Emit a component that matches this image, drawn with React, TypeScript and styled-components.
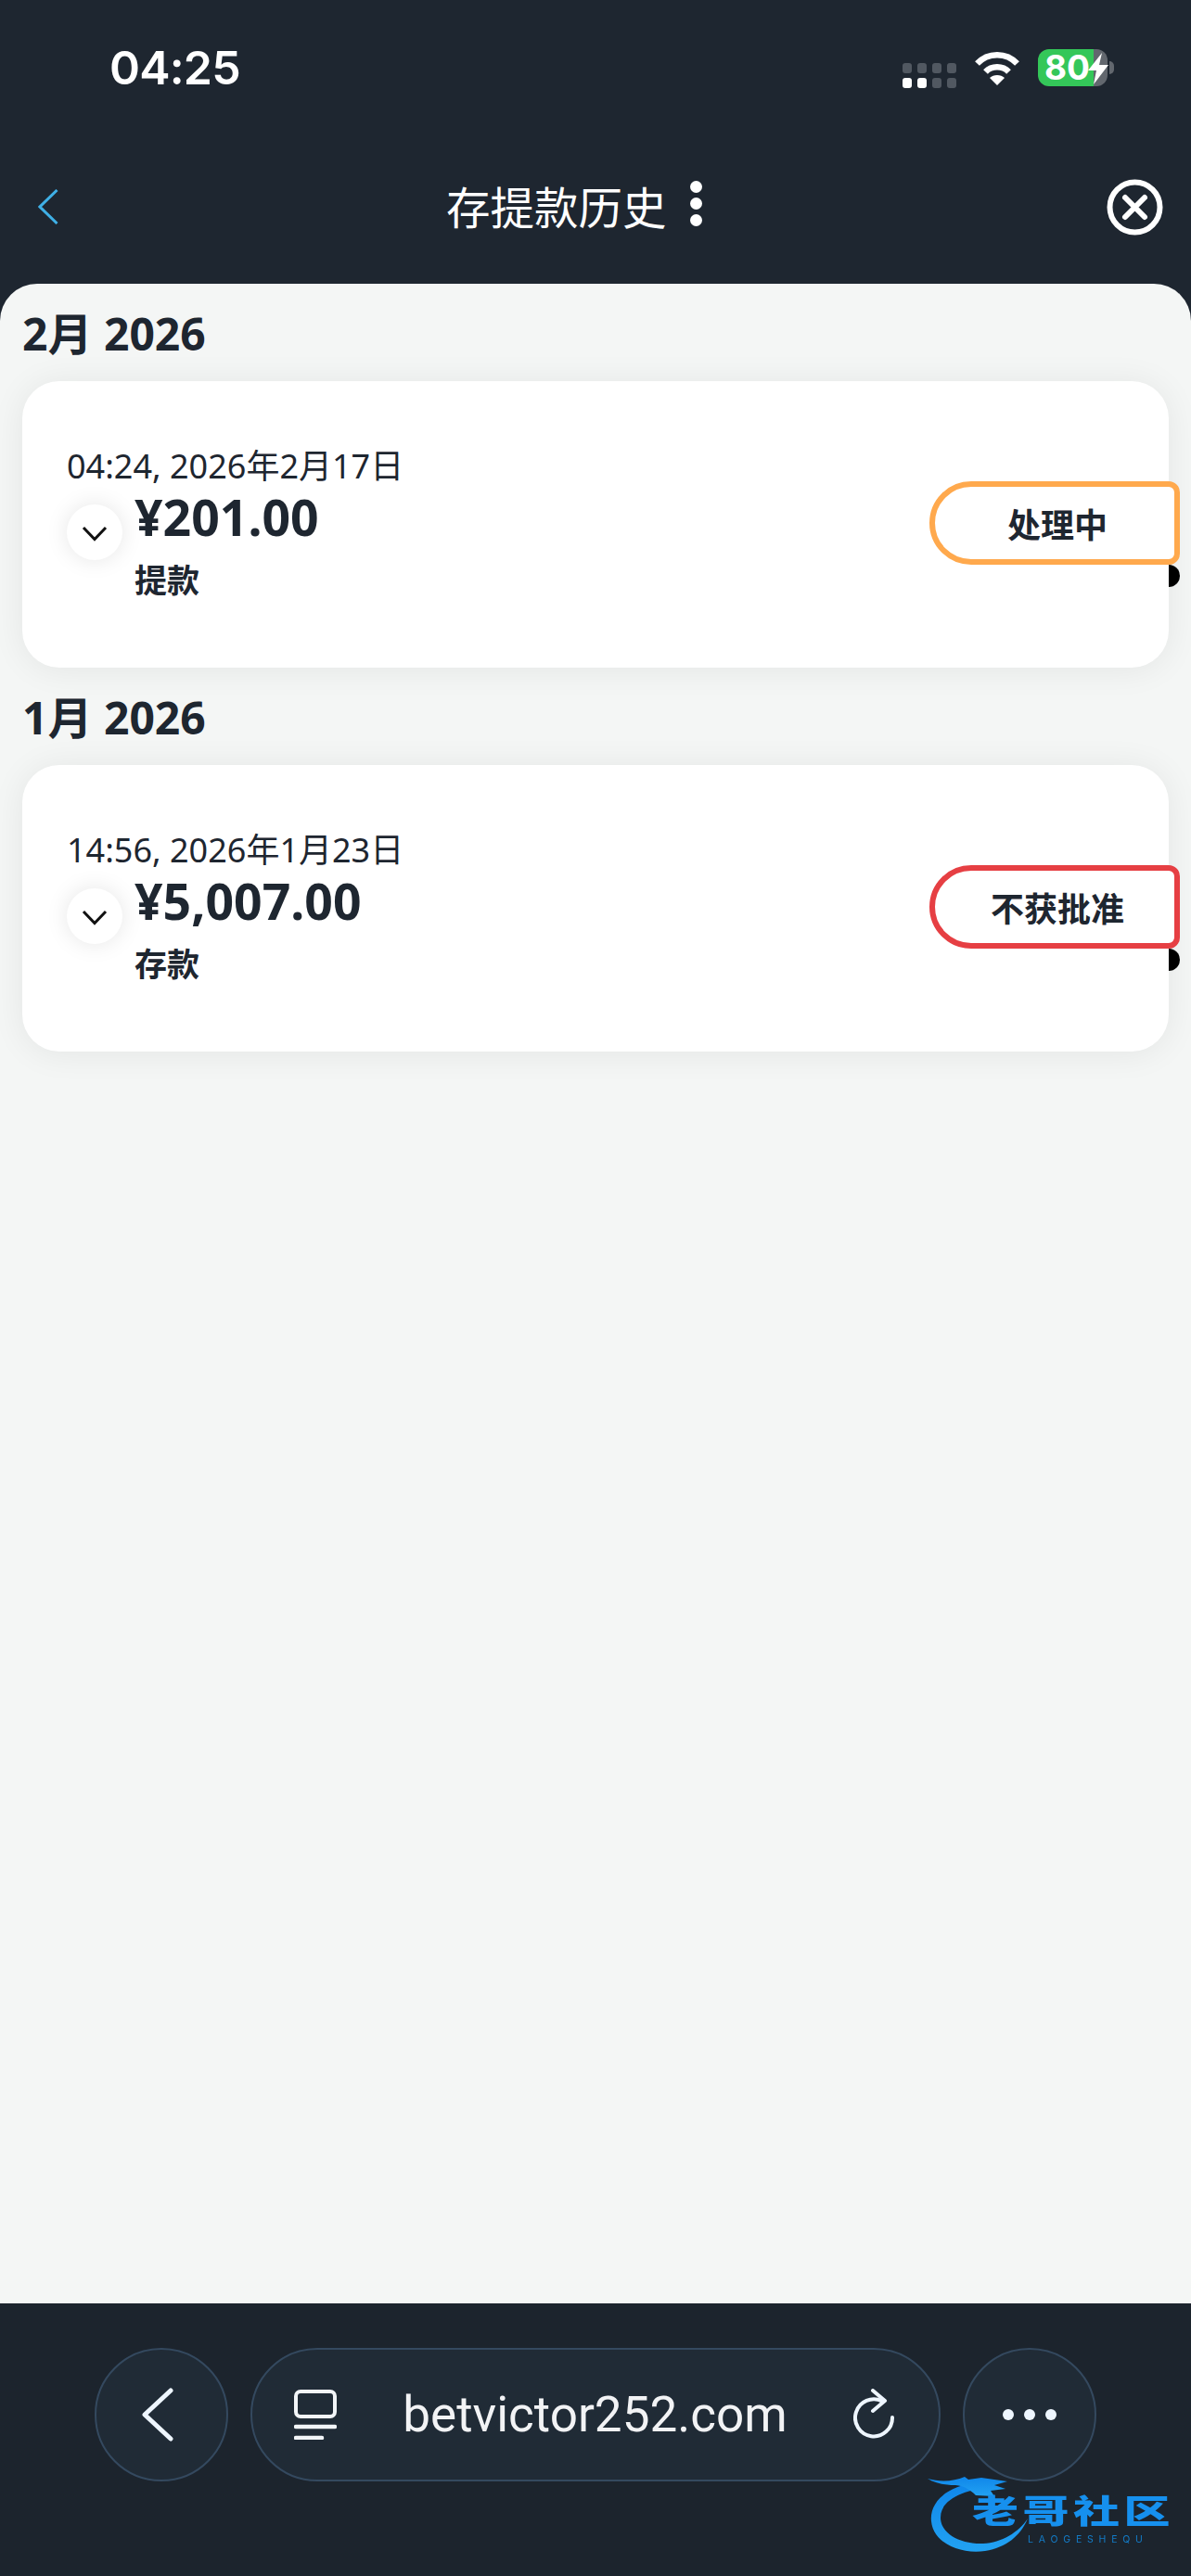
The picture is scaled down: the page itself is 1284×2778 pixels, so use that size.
import React from 'react';
import styled, { createGlobalStyle } from 'styled-components';

const GlobalStyle = createGlobalStyle`
  html, body {
    margin: 0;
    padding: 0;
    background: #1e2630;
  }
  * {
    box-sizing: border-box;
  }
`;

const CJK = '"Noto Sans", "Noto Sans CJK SC", sans-serif';

type Entry = {
  month: string;
  date: string;
  amount: string;
  kind: string;
  status: string;
  statusColor: string;
};

const entries: Entry[] = [
  { month: '2月 2026', date: '04:24, 2026年2月17日', amount: '¥201.00', kind: '提款', status: '处理中', statusColor: '#ffa94d' },
  { month: '1月 2026', date: '14:56, 2026年1月23日', amount: '¥5,007.00', kind: '存款', status: '不获批准', statusColor: '#e63f43' },
];

const App: React.FC = () => {
  return (
    <>
      <GlobalStyle />
      <Page>
        <Header>
          <StatusBar>
            <Clock>04:25</Clock>
            <StatusIcons>
              <Signal>
                {[0, 1, 2, 3, 4, 5, 6, 7].map((i) => (
                  <SignalDot key={i} $on={i === 4 || i === 5} />
                ))}
              </Signal>
              <svg width="50" height="38" viewBox="0 0 50 38" fill="none">
                <path d="M3.5 14.5 C15 2 35 2 46.5 14.5" stroke="#fff" strokeWidth="6.5" strokeLinejoin="round" />
                <path d="M12.5 23.5 C19 16.5 31 16.5 37.5 23.5" stroke="#fff" strokeWidth="6.5" />
                <path d="M17 30 C21 26 29 26 33 30 L25 38 Z" fill="#fff" />
              </svg>
              <Battery>
                <BatteryLevel>80</BatteryLevel>
                <BatteryBolt width="24" height="34" viewBox="0 0 24 34">
                  <path d="M16 0 L1 19 H10 L7 34 L23 13 H13 Z" fill="#fff" />
                </BatteryBolt>
                <BatteryNub />
              </Battery>
            </StatusIcons>
          </StatusBar>
          <NavBar>
            <BackIcon width="22" height="38" viewBox="0 0 22 38" fill="none">
              <path d="M20.5 1 L2 19 L20.5 37" stroke="#3fb0e6" strokeWidth="3" />
            </BackIcon>
            <Title>存提款历史</Title>
            <MenuDots>
              <i />
              <i />
              <i />
            </MenuDots>
            <CloseIcon width="61" height="61" viewBox="0 0 61 61" fill="none">
              <circle cx="30.5" cy="30.5" r="27" stroke="#fff" strokeWidth="6" />
              <path d="M20 20 L41 41 M41 20 L20 41" stroke="#fff" strokeWidth="6" strokeLinecap="round" />
            </CloseIcon>
          </NavBar>
        </Header>

        <Content>
          {entries.map((entry) => (
            <section key={entry.month}>
              <MonthTitle>{entry.month}</MonthTitle>
              <Card>
                <CardInfo>
                  <DateText>{entry.date}</DateText>
                  <AmountRow>
                    <ExpandButton>
                      <svg width="28" height="17" viewBox="0 0 28 17" fill="none">
                        <path d="M2 2 L14 14.5 L26 2" stroke="#111" strokeWidth="3" />
                      </svg>
                    </ExpandButton>
                    <div>
                      <Amount>{entry.amount}</Amount>
                      <Kind>{entry.kind}</Kind>
                    </div>
                  </AmountRow>
                </CardInfo>
                <StatusBadge $color={entry.statusColor}>{entry.status}</StatusBadge>
              </Card>
            </section>
          ))}
        </Content>

        <BrowserBar>
          <RoundButton>
            <BackArrow width="36" height="58" viewBox="0 0 36 58" fill="none">
              <path d="M32 3 L4 29 L32 55" stroke="#eef6ff" strokeWidth="5" strokeLinecap="round" strokeLinejoin="round" />
            </BackArrow>
          </RoundButton>
          <UrlPill>
            <svg width="46" height="54" viewBox="0 0 46 54" fill="none">
              <rect x="2" y="2" width="42" height="27" rx="5" stroke="#f2f5f8" strokeWidth="4" />
              <path d="M2 40 H44 M2 52 H30" stroke="#f2f5f8" strokeWidth="4.5" strokeLinecap="round" />
            </svg>
            <UrlText>betvictor252.com</UrlText>
            <svg width="46" height="56" viewBox="0 0 46 56" fill="none">
              <path d="M31 13.5 A20 20 0 1 0 42 31" stroke="#eef6ff" strokeWidth="4" strokeLinecap="round" />
              <path d="M21 2 L34 13 L21 24" stroke="#eef6ff" strokeWidth="4" strokeLinecap="round" strokeLinejoin="round" />
            </svg>
          </UrlPill>
          <RoundButton>
            <MoreDots>
              <i />
              <i />
              <i />
            </MoreDots>
          </RoundButton>
          <Watermark>
            <DragonMark width="112" height="90" viewBox="0 0 112 90">
              <defs>
                <linearGradient id="dragon" x1="0" y1="0" x2="0" y2="1">
                  <stop offset="0" stopColor="#0f86ea" />
                  <stop offset="1" stopColor="#22a2f2" />
                </linearGradient>
              </defs>
              <path d="M48 12 C17 17 2 35 4 53 C6 76 35 89 62 85 C85 81 100 69 108 50 C98 65 80 76 60 77 C35 78 14 66 14 49 C14 34 28 24 54 18 Z" fill="url(#dragon)" />
              <path d="M0 7 C14 11 28 10 40 5 L44 8 L58 6 L86 10 L72 14 L84 18 L68 20 L72 26 L52 25 C46 19 40 15 30 14 C18 14 8 12 0 7 Z" fill="url(#dragon)" />
            </DragonMark>
            <WatermarkText>
              <WatermarkName>老哥社区</WatermarkName>
              <WatermarkLatin>LAOGESHEQU</WatermarkLatin>
            </WatermarkText>
          </Watermark>
        </BrowserBar>
      </Page>
    </>
  );
};

export default App;

const Page = styled.div`
  display: flex;
  flex-direction: column;
  width: 1284px;
  height: 2778px;
  overflow: hidden;
  background: #1e2630;
`;

const Header = styled.header`
  flex: 0 0 306px;
  display: flex;
  flex-direction: column;
  background: #1e2630;
`;

const StatusBar = styled.div`
  flex: 0 0 146px;
  display: flex;
  align-items: center;
  justify-content: space-between;
  padding: 0 90px 0 118px;
`;

const Clock = styled.span`
  font-family: Inter, Roboto, sans-serif;
  font-size: 50px;
  font-weight: 600;
  letter-spacing: -0.8px;
  color: #fff;
`;

const StatusIcons = styled.div`
  display: flex;
  align-items: center;
  gap: 19px;
`;

const Signal = styled.div`
  display: grid;
  grid-template-columns: repeat(4, 10px);
  grid-auto-rows: 11px;
  gap: 5px 6px;
  margin-top: 16px;
`;

const SignalDot = styled.span<{ $on: boolean }>`
  border-radius: 3px;
  background: ${(p) => (p.$on ? '#fff' : '#515861')};
`;

const Battery = styled.div`
  position: relative;
  display: flex;
  align-items: center;
  width: 75px;
  height: 40px;
  padding-left: 7px;
  border-radius: 12px;
  background: linear-gradient(90deg, #34c759 0 80%, #62676e 80% 100%);
`;

const BatteryLevel = styled.span`
  font-family: Inter, Roboto, sans-serif;
  font-size: 37px;
  font-weight: 700;
  line-height: 40px;
  color: #fff;
`;

const BatteryBolt = styled.svg`
  position: absolute;
  top: 4px;
  left: 53px;
`;

const BatteryNub = styled.span`
  position: absolute;
  top: 13px;
  right: -7px;
  width: 5px;
  height: 14px;
  border-radius: 0 7px 7px 0;
  background: #62676e;
`;

const NavBar = styled.div`
  flex: 1;
  display: flex;
  align-items: center;
  padding: 0 30px 6px 41px;
`;

const BackIcon = styled.svg`
  margin-right: 418px;
`;

const Title = styled.h1`
  margin: 0;
  padding-top: 2px;
  font-family: ${CJK};
  font-size: 47.5px;
  font-weight: 400;
  line-height: 60px;
  color: #fff;
`;

const MenuDots = styled.div`
  display: flex;
  flex-direction: column;
  gap: 5px;
  margin-left: 25px;
  margin-top: -8px;

  i {
    display: block;
    width: 13px;
    height: 13px;
    border-radius: 50%;
    background: #fff;
  }
`;

const CloseIcon = styled.svg`
  margin-left: auto;
`;

const Content = styled.main`
  flex: 1;
  padding: 24px 24px 0;
  border-radius: 40px 40px 0 0;
  background: #f4f6f5;
`;

const MonthTitle = styled.h2`
  margin: 0;
  height: 81px;
  font-family: ${CJK};
  font-size: 48px;
  font-weight: 700;
  line-height: 60px;
  color: #1e2630;
`;

const Card = styled.div`
  display: flex;
  align-items: center;
  justify-content: space-between;
  width: 1236px;
  height: 309px;
  margin-bottom: 24px;
  padding-left: 48px;
  border-radius: 40px;
  background: #fff;
  box-shadow: 0 2px 36px rgba(0, 0, 0, 0.07);
`;

const CardInfo = styled.div`
  display: flex;
  flex-direction: column;
`;

const DateText = styled.div`
  font-family: ${CJK};
  font-size: 36px;
  line-height: 44px;
  color: #1e2630;
`;

const AmountRow = styled.div`
  display: flex;
  align-items: flex-start;
  gap: 13px;
`;

const ExpandButton = styled.div`
  display: flex;
  align-items: center;
  justify-content: center;
  width: 60px;
  height: 60px;
  margin-top: 19px;
  padding-top: 3px;
  border-radius: 50%;
  background: #fff;
  box-shadow: 0 0 24px rgba(0, 0, 0, 0.1);
`;

const Amount = styled.div`
  font-family: ${CJK};
  font-size: 53.5px;
  font-weight: 700;
  line-height: 66px;
  color: #1e2630;
`;

const Kind = styled.div`
  margin-top: 10px;
  font-family: ${CJK};
  font-size: 35px;
  font-weight: 700;
  line-height: 50px;
  color: #1e2630;
`;

const StatusBadge = styled.div<{ $color: string }>`
  position: relative;
  display: flex;
  align-items: center;
  justify-content: center;
  width: 270px;
  height: 90px;
  margin-right: -12px;
  margin-bottom: 3px;
  padding-left: 6px;
  border: 6px solid ${(p) => p.$color};
  border-radius: 45px 12px 12px 45px;
  background: #fff;
  font-family: ${CJK};
  font-size: 36px;
  font-weight: 700;
  color: #1e2630;

  &::after {
    content: '';
    position: absolute;
    right: -6px;
    bottom: -30px;
    width: 12px;
    height: 24px;
    border-radius: 0 12px 12px 0;
    background: #000;
  }
`;

const BrowserBar = styled.footer`
  position: relative;
  flex: 0 0 294px;
  display: flex;
  align-items: flex-start;
  gap: 24px;
  padding: 48px 0 0 102px;
  background: #1c242d;
`;

const RoundButton = styled.div`
  display: flex;
  align-items: center;
  justify-content: center;
  width: 144px;
  height: 144px;
  border: 2px solid #34495f;
  border-radius: 50%;
  background: #202b36;
`;

const BackArrow = styled.svg`
  margin-right: 8px;
`;

const UrlPill = styled.div`
  display: flex;
  align-items: center;
  width: 744px;
  height: 144px;
  padding: 0 46px 0 45px;
  border: 2px solid #34495f;
  border-radius: 72px;
  background: #202b36;
`;

const UrlText = styled.span`
  flex: 1;
  text-align: center;
  font-family: Roboto, sans-serif;
  font-size: 53px;
  color: #f2f3f5;
`;

const MoreDots = styled.div`
  display: flex;
  gap: 11px;

  i {
    display: block;
    width: 12px;
    height: 12px;
    border-radius: 50%;
    background: #eef6ff;
  }
`;

const Watermark = styled.div`
  position: absolute;
  top: 182px;
  left: 1000px;
  display: flex;
  filter: blur(0.7px);
`;

const DragonMark = styled.svg`
  flex: none;
`;

const WatermarkText = styled.div`
  display: flex;
  flex-direction: column;
  align-items: flex-start;
  margin-left: -64px;
  padding-top: 22px;
`;

const WatermarkName = styled.span`
  font-family: "Noto Sans CJK SC", sans-serif;
  font-size: 50px;
  font-weight: 900;
  line-height: 36px;
  letter-spacing: 4.5px;
  white-space: nowrap;
  color: #1690ee;
  transform: scaleY(0.7);
  transform-origin: left center;
`;

const WatermarkLatin = styled.span`
  margin-left: 60px;
  margin-top: 9px;
  font-family: Inter, sans-serif;
  font-size: 10.5px;
  line-height: 11px;
  letter-spacing: 5.8px;
  color: #137cc8;
`;
